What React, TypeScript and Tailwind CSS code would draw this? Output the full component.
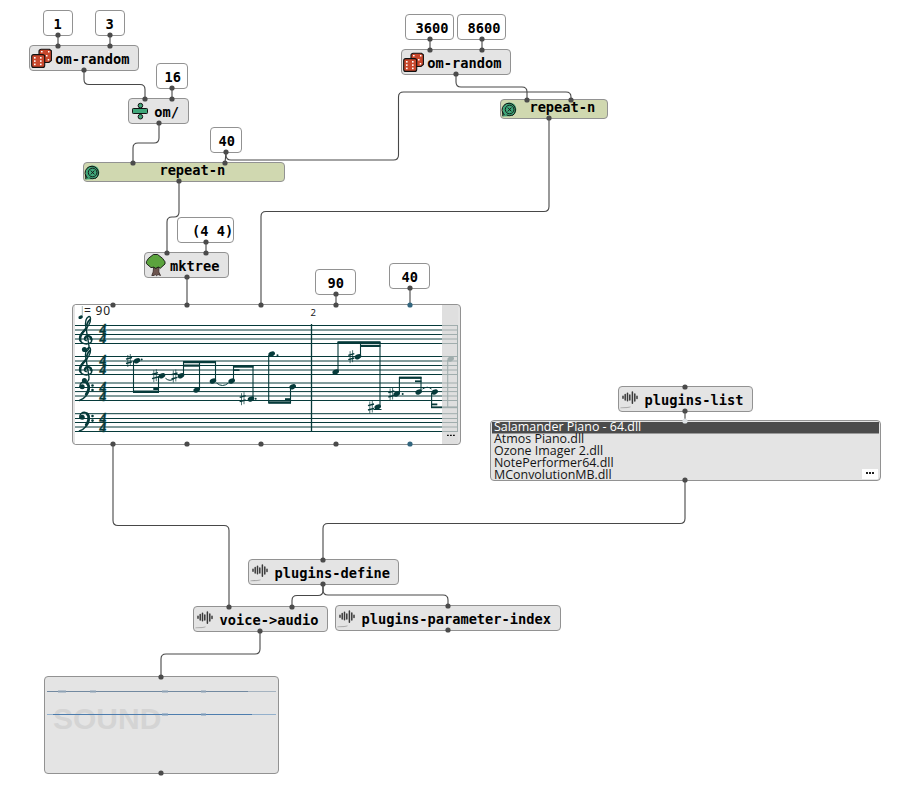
import React from "react";

type IconName = "dice" | "divide" | "loop" | "tree" | "wave";

interface PatchNode {
  x: number;
  y: number;
  w: number;
  h: number;
  label: string;
  pad: number;
  kind: "value" | "box" | "loop";
  icon?: IconName;
}

const nodes: PatchNode[] = [
  { x: 43, y: 10, w: 30, h: 26, label: "1", pad: 9.5, kind: "value" },
  { x: 95, y: 10, w: 30, h: 26, label: "3", pad: 9.5, kind: "value" },
  { x: 29, y: 45, w: 110, h: 26, label: "om-random", pad: 25.3, kind: "box", icon: "dice" },
  { x: 156, y: 63, w: 32, h: 26, label: "16", pad: 7.6, kind: "value" },
  { x: 128, y: 98, w: 61, h: 26, label: "om/", pad: 25.3, kind: "box", icon: "divide" },
  { x: 210, y: 127, w: 32, h: 26, label: "40", pad: 7.6, kind: "value" },
  { x: 83, y: 162, w: 202, h: 20, label: "repeat-n", pad: 75.4, kind: "loop", icon: "loop" },
  { x: 405, y: 14, w: 49, h: 26, label: "3600", pad: 9.6, kind: "value" },
  { x: 457, y: 14, w: 49, h: 26, label: "8600", pad: 9.6, kind: "value" },
  { x: 401, y: 49, w: 110, h: 26, label: "om-random", pad: 25.3, kind: "box", icon: "dice" },
  { x: 500, y: 99, w: 108, h: 20, label: "repeat-n", pad: 28.4, kind: "loop", icon: "loop" },
  { x: 177, y: 217, w: 57, h: 26, label: "(4 4)", pad: 14, kind: "value" },
  { x: 144, y: 252, w: 85, h: 26, label: "mktree", pad: 25, kind: "box", icon: "tree" },
  { x: 315, y: 269, w: 41, h: 26, label: "90", pad: 11.5, kind: "value" },
  { x: 389, y: 263, w: 41, h: 26, label: "40", pad: 11.5, kind: "value" },
  { x: 618, y: 386, w: 135, h: 26, label: "plugins-list", pad: 25.5, kind: "box", icon: "wave" },
  { x: 248, y: 559, w: 151, h: 26, label: "plugins-define", pad: 25.5, kind: "box", icon: "wave" },
  { x: 193, y: 606, w: 135, h: 26, label: "voice->audio", pad: 25.5, kind: "box", icon: "wave" },
  { x: 335, y: 605, w: 226, h: 26, label: "plugins-parameter-index", pad: 25.5, kind: "box", icon: "wave" },
];

const kindClass = {
  value: "bg-white",
  box: "bg-[#e4e4e4]",
  loop: "bg-[#d0d8b0]",
};

// Icons use the same pixel grid as their node, with the origin at its outer corner.
function Icon({ name }: { name: IconName }) {
  return (
    <svg className="absolute -left-px -top-px h-[26px] w-[26px] overflow-visible">
      {name === "dice" && (
        <g stroke="#111" strokeWidth="1.1">
          <path d="M10.5 5 12 4.3H20.5L22.4 5.8V15.5L20 17.5H10V6Z" fill="#c8472c" />
          <rect x="2.7" y="9.6" width="13" height="12.8" rx="2" fill="#c8472c" />
          <g fill="#fff" stroke="none">
            <rect x="12" y="6" width="1.6" height="1.4" />
            <rect x="19" y="6" width="1.5" height="1.5" />
            <rect x="17" y="10" width="1.5" height="1.5" />
            <rect x="18.7" y="14" width="1.5" height="1.5" />
            <rect x="5" y="12" width="1.6" height="1.6" />
            <rect x="5" y="15.3" width="1.6" height="1.6" />
            <rect x="5" y="18.6" width="1.6" height="1.6" />
            <rect x="11" y="12" width="1.6" height="1.6" />
            <rect x="11" y="15.3" width="1.6" height="1.6" />
            <rect x="11" y="18.6" width="1.6" height="1.6" />
          </g>
        </g>
      )}
      {name === "divide" && (
        <g fill="#3fa679" stroke="#111" strokeWidth="1">
          <circle cx="12.4" cy="7.6" r="2.3" />
          <circle cx="12.4" cy="18.7" r="2.3" />
          <rect x="4.5" y="10.5" width="15" height="5" rx=".8" />
        </g>
      )}
      {name === "loop" && (
        <g fill="none" stroke="#111">
          <path d="M2.6 17.4V10.5a6.9 6.9 0 1 1 6.9 6.7Z" fill="#3fa679" stroke="none" />
          <path d="M4.6 16.2A6.7 6.7 0 1 1 12.4 16.6M2.8 13.2V17.2" strokeWidth="1" />
          <circle cx="9.6" cy="10.5" r="4.3" strokeWidth=".9" />
          <path d="M7.8 8.6l3.6 3.8M11.4 8.6 7.8 12.4M6.6 15.9c2 1 4 1 6 0" strokeWidth=".9" />
        </g>
      )}
      {name === "tree" && (
        <g stroke="#111" strokeWidth=".9">
          <path d="M9.6 15 9.2 20 7.8 23.5H10L11.3 22.3 12.4 23.8 14 22.5 16.5 23.5 14.8 20 15 15Z" fill="#6d554f" stroke="#3e302c" />
          <path d="M9.4 2.5H13.6L18.6 6.4 21 9.8V12L16.4 16.2 14.2 15 11.8 16.4 9.6 15.2 7 15.6 2.4 11.6V9.6L4.6 6.2Z" fill="#5ba33d" strokeLinejoin="round" />
        </g>
      )}
      {name === "wave" && (
        <g stroke="#3a3a3a" strokeWidth="1.5" strokeLinecap="round">
          <path d="M5 10.3v2M7.2 8.6v5.4M9.5 7.2v7.6M11.8 9v5M14.4 5.9v11.4M16.8 8v7M19 10.2v2.3" />
          <path d="M2.8 21.8l6-.2 3.4-.7" stroke="#aaa" strokeWidth=".8" />
        </g>
      )}
    </svg>
  );
}

function Node({ node }: { node: PatchNode }) {
  return (
    <div
      className={`absolute rounded-[4px] border border-[#929292] ${kindClass[node.kind]}`}
      style={{ left: node.x, top: node.y, width: node.w, height: node.h }}
    >
      {node.icon && <Icon name={node.icon} />}
      <div
        className={`whitespace-pre font-['DejaVu_Sans_Mono',monospace] text-[13.7px] font-bold leading-5 text-black ${node.kind === "loop" ? "-mt-[3px]" : "mt-[3px]"}`}
        style={{ paddingLeft: node.pad }}
      >
        {node.label}
      </div>
    </div>
  );
}

const INK = "#063a3a";

const staffLines = [
  325.5, 330, 334.5, 339, 343.5, 356.5, 361, 365.5, 370, 374.5, 383, 387.5, 391.6, 396, 400.5, 413.7, 418.5, 422.5, 427,
  431.5,
];

const heads: [number, number][] = [
  [137, 360.7], [162, 375.7], [181, 375.7], [196.7, 390], [213, 381], [231.7, 381], [251, 399], [271.7, 354],
  [292.7, 386.7], [335.7, 372], [358, 356.7], [377.7, 407], [396.7, 394], [418.7, 392], [434.7, 392], [450.7, 359],
];

const sharps: [number, number][] = [
  [129, 360.5], [155, 375.7], [174.5, 376], [242.7, 398.7], [351.3, 356.7], [371, 407], [391.3, 394],
];

const augmentationDots: [number, number][] = [
  [141.7, 359.5], [255.7, 398.7], [277.5, 355.3], [402.7, 394],
];

const stems: [number, number, number][] = [
  [133.5, 361, 392], [158.5, 376, 392], [183.5, 362, 375], [199.5, 362, 389], [215.5, 362, 380], [233.5, 366, 380],
  [253, 366, 398], [268.7, 355, 403], [290.5, 387, 403], [338, 342, 371], [360.5, 342, 356], [380, 342, 406],
  [399.4, 377, 393], [421, 377, 391], [431.6, 393, 408], [447.7, 360, 408],
];

// x start, x end, top, thickness
const beams: [number, number, number, number][] = [
  [133, 159, 390.5, 2.5], [153.3, 159, 387.8, 2.2], [183, 216, 361, 2.2], [183, 200, 364.5, 2.2],
  [233, 253.5, 365.7, 2], [233, 239.5, 369.3, 1.6], [268.3, 291, 401.3, 2.5], [285, 291, 398.2, 2],
  [337.5, 380.5, 341.2, 2.3], [360, 380.5, 344.8, 2.2], [399, 421.5, 376.6, 2.3], [415, 421.5, 380.4, 1.7],
  [431, 458, 406.4, 1.8], [431, 437.3, 403.5, 1.8],
];

const timeSignatures = [334.2, 365.2, 391.8, 422.6];

function TrebleClef({ dy }: { dy: number }) {
  return (
    <g transform={`translate(0 ${dy})`} fill="none" stroke={INK} strokeLinecap="round">
      <path
        d="M86.2 340.7C83.2 339.4 84.4 335.6 88 335.8c4.4 .4 5.4 6.4 .6 7.9C84 345 79 342 79.6 337.6c.6-4.6 6.4-8 9.2-12.6 2.6-4.4 2-9.6-.2-8.4-2.8 1.6-3.6 6.4-2.6 11.4l3 18c.6 4.4-3 6.6-5.4 4.6"
        strokeWidth="1.4"
      />
      <path d="M80.4 340.4c-1.6-5 3-8.8 6.4-12.6" strokeWidth="2.2" />
      <path d="M85.4 338c.8-2.6 5.8-2.6 6 1.6" strokeWidth="2.1" />
      <path d="M86.9 324.6c.6-3 1.8-4.2 3.2-5.2" strokeWidth="1.8" />
      <circle cx="84.4" cy="349.6" r="2.5" fill={INK} stroke="none" />
    </g>
  );
}

function BassClef({ dy }: { dy: number }) {
  return (
    <g transform={`translate(0 ${dy})`} fill="none" stroke={INK} strokeLinecap="round">
      <path d="M79.8 417.5C79.6 413.4 82.6 412 85.2 412.4c6 .8 4.6 10 1 13.8-2 2.4-4 3.8-6.8 4.8" strokeWidth="1.4" />
      <path d="M86.8 413.8c3.2 2.6 1.6 8-.8 11" strokeWidth="2.4" />
      <circle cx="82.2" cy="417.3" r="2.5" fill={INK} stroke="none" />
      <circle cx="92.5" cy="416" r="1.3" fill={INK} stroke="none" />
      <circle cx="92.5" cy="420.6" r="1.3" fill={INK} stroke="none" />
    </g>
  );
}

function Score() {
  return (
    <div className="absolute left-[72px] top-[304px] h-[141px] w-[389px] rounded-[4px] border border-[#929292] bg-[#e4e4e4]">
      <div className="mx-[2px] h-full bg-white">
        <svg className="block h-full w-[383px] overflow-visible" viewBox="75 305 383 139">
          <g stroke={INK} strokeWidth="1">
            {staffLines.map((y) => (
              <line key={y} x1="75" x2="458" y1={y} y2={y} />
            ))}
            <line x1="311.5" x2="311.5" y1="324" y2="432" strokeWidth="1.3" />
            <line x1="457.5" x2="457.5" y1="325" y2="432" />
          </g>
          <TrebleClef dy={0} />
          <TrebleClef dy={31} />
          <BassClef dy={-30.5} />
          <BassClef dy={0} />
          <g
            fill={INK}
            stroke={INK}
            strokeWidth=".4"
            textAnchor="middle"
            className="font-['Liberation_Serif',serif] text-[13.6px] font-bold italic"
          >
            {timeSignatures.map((y) => (
              <text key={y} x="103" y={y}>
                4<tspan x="103" dy="9.2">4</tspan>
              </text>
            ))}
          </g>
          <g fill={INK}>
            {heads.map(([x, y]) => (
              <ellipse key={x} cx={x} cy={y} rx="3.4" ry="2.4" transform={`rotate(-25 ${x} ${y})`} />
            ))}
            {beams.map(([a, b, y, t]) => (
              <rect key={`${a}-${y}`} x={a} y={y} width={b - a} height={t} />
            ))}
            {augmentationDots.map(([x, y]) => (
              <circle key={x} cx={x} cy={y} r="1" />
            ))}
          </g>
          <g stroke={INK} fill="none">
            {stems.map(([x, a, b]) => (
              <line key={x} x1={x} x2={x} y1={a} y2={b} strokeWidth="1.1" />
            ))}
            {sharps.map(([x, y]) => (
              <g key={x} transform={`translate(${x} ${y})`}>
                <path d="M-1.2-5.5v12M1.3-6.5v12" strokeWidth=".7" />
                <path d="M-3-1.3 3-3M-3 3 3 1.3" strokeWidth="1.4" />
              </g>
            ))}
            <path d="M165.5 378.3q4.5 4 9 0M216.5 383q6 5 12 0M422.5 389q5-3.5 9 0M373.5 409.5h8" strokeWidth="1" />
            <path d="M82.3 306v11" strokeWidth=".6" opacity=".6" />
          </g>
          <ellipse cx="80.6" cy="317.2" rx="2.3" ry="1.7" fill={INK} transform="rotate(-25 80.6 317.2)" />
          <g fill="#222" className="font-['Noto_Sans',sans-serif]">
            <text x="84" y="315.2" className="text-[12px]" textLength="26">= 90</text>
            <text x="310.4" y="315.7" className="text-[9.5px]">2</text>
          </g>
          <rect x="442" y="305" width="16" height="139" fill="#d4d4d4" opacity=".75" />
          <path d="M447 435.3h1.8M450 435.3h1.8M453 435.3h1.8" stroke="#111" strokeWidth="1.3" />
        </svg>
      </div>
    </div>
  );
}

const plugins = [
  "Salamander Piano - 64.dll",
  "Atmos Piano.dll",
  "Ozone Imager 2.dll",
  "NotePerformer64.dll",
  "MConvolutionMB.dll",
];

function PluginList() {
  return (
    <div className="absolute left-[490px] top-[420px] h-[61px] w-[391px] rounded-[4px] border border-[#929292] bg-[#e4e4e4] px-px pt-px">
      <ul className="flex flex-col font-['Open_Sans',sans-serif] text-[12.45px]">
        {plugins.map((name, i) => (
          <li
            key={name}
            className={`h-3 whitespace-nowrap pl-[2px] leading-[10px] ${i === 0 ? "border-b border-[#999] bg-[#4b4b4b] text-white" : "text-[#141414]"}`}
          >
            {name}
          </li>
        ))}
      </ul>
      <div className="absolute bottom-px right-[2px] flex h-[10px] w-4 justify-center gap-px bg-white pt-[3px]">
        <i className="h-[1.5px] w-[2px] bg-[#222]" />
        <i className="h-[1.5px] w-[2px] bg-[#222]" />
        <i className="h-[1.5px] w-[2px] bg-[#222]" />
      </div>
    </div>
  );
}

function SoundBox() {
  return (
    <div className="absolute left-[44px] top-[676px] h-[98px] w-[235px] rounded-[4px] border border-[#929292] bg-[#e4e4e4]">
      <div className="pl-[8px] pt-[27px] font-['Liberation_Sans',Arial,sans-serif] text-[30px] font-bold leading-[30px] text-[#d4d4d4]">
        SOUND
      </div>
      <svg className="absolute left-0 top-0 h-[96px] w-[233px]" viewBox="45 677 233 96">
        <path d="M47 691.5H276" stroke="#a5b3c0" strokeWidth="1" />
        <path d="M47 691.5H248" stroke="#7289a0" strokeWidth="1" />
        <path d="M58 691.5h8M90 691.5h6M162 691.5h6M201 691.5h5" stroke="#8ea2b5" strokeWidth="1.8" />
        <path d="M47 714.5H276" stroke="#93b0cc" strokeWidth="1" />
        <path d="M53 714.5H252" stroke="#4d7dae" strokeWidth="1" />
        <path d="M162 714.5h6M201 714.5h5" stroke="#7798b9" strokeWidth="1.8" />
      </svg>
    </div>
  );
}

// A cable leaves downwards, crosses at height `mid`, and continues to its target.
function cable(x1: number, y1: number, mid: number, x2: number, y2: number) {
  const r = Math.min(5, Math.abs(x2 - x1) / 2);
  const s = Math.sign(x2 - x1);
  const v1 = Math.sign(mid - y1);
  const v2 = Math.sign(y2 - mid);
  return `M${x1} ${y1}V${mid - v1 * r}Q${x1} ${mid} ${x1 + s * r} ${mid}H${x2 - s * r}Q${x2} ${mid} ${x2} ${mid + v2 * r}V${y2}`;
}

const cables = [
  cable(84, 70, 84.5, 145, 99),
  cable(159, 123, 143, 133, 163),
  cable(456, 74, 87, 527, 100),
  cable(226, 152, 160, 398.5, 126),
  cable(398.5, 126, 92, 571, 100),
  cable(549, 118, 211.5, 261, 305),
  cable(179, 181, 217, 167, 253),
  cable(113, 444, 525.5, 229, 607),
  cable(685, 480, 523.5, 323, 560),
  cable(323, 584, 595.5, 292, 607),
  cable(323, 584, 595, 448, 606),
  cable(260, 631, 654, 161, 677),
  "M58 35V46M110 35V46M172 88V99M226 152L225 163M430 39V50M482 39V50M206 242V253M187 277V305M336 294V305M410 288V305M685 411V421",
];

const ports: [number, number][] = [
  [58, 35], [58, 46], [110, 35], [110, 46], [84, 70], [145, 99], [172, 88], [172, 99], [159, 123], [133, 163],
  [226, 152], [225, 163], [179, 181], [167, 253], [206, 242], [206, 253], [187, 277], [430, 39], [430, 50],
  [482, 39], [482, 50], [456, 74], [527, 100], [571, 100], [549, 118], [113, 305], [187, 305], [261, 305],
  [336, 294], [336, 305], [410, 288], [113, 444], [187, 444], [261, 444], [336, 444], [685, 387], [685, 411],
  [685, 480], [323, 560], [323, 584], [229, 607], [292, 607], [260, 631], [448, 606], [448, 630], [161, 677],
  [161, 773],
];

export default function App() {
  return (
    <div className="relative h-[800px] w-[901px] overflow-hidden bg-white">
      {nodes.map((node) => (
        <Node key={`${node.x}-${node.y}`} node={node} />
      ))}
      <Score />
      <PluginList />
      <SoundBox />
      <svg className="pointer-events-none absolute inset-0 h-[800px] w-[901px]">
        <g fill="none" stroke="#484848" strokeWidth="1.1">
          {cables.map((d) => (
            <path key={d} d={d} />
          ))}
        </g>
        <g fill="#4b4b4b">
          {ports.map(([x, y]) => (
            <circle key={`${x}-${y}`} cx={x} cy={y} r="2.6" />
          ))}
        </g>
        <g fill="#33667f">
          <circle cx="410" cy="305" r="2.6" />
          <circle cx="410" cy="444" r="2.6" />
        </g>
        <circle cx="685" cy="421" r="2.6" fill="#dfe3e6" />
      </svg>
    </div>
  );
}
